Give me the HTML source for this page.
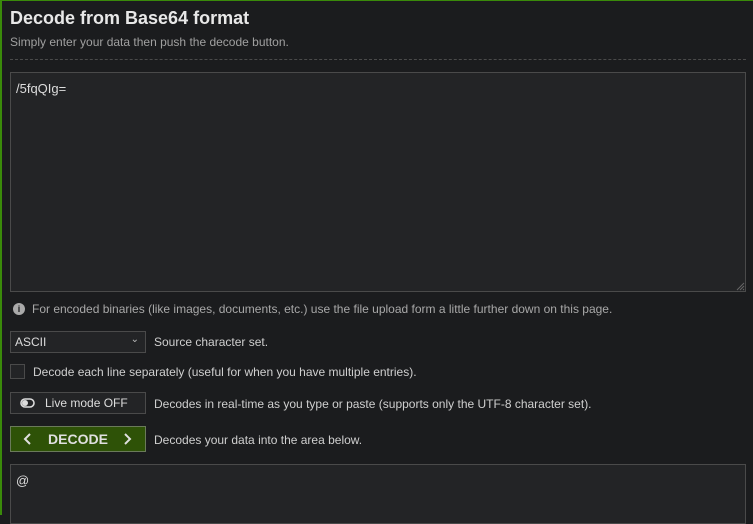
<!DOCTYPE html>
<html><head><style>
*{box-sizing:border-box;margin:0;padding:0}
body{width:753px;height:515px;overflow:hidden;background:#1b1c1e;font-family:"Liberation Sans",sans-serif;color:#d0d0d0;position:relative}
.a{position:absolute}
h1{position:absolute;left:10px;top:8px;font-size:18px;font-weight:bold;color:#e8e8e8}
.sub{left:10px;top:35px;font-size:12px;color:#a0a0a0}
.dash{left:10px;top:59px;width:736px;border-top:1px dashed #4a4a4a}
.ta{left:10px;width:736px;background:#232426;border:1px solid #4a4a4a;font-size:13px;color:#ddd;padding:8px 5px}
.lbl{font-size:12px;color:#cfcfcf}
.box{left:10px;width:136px;border:1px solid #4a4a4a;background:#232426;font-size:12px;color:#ddd}
</style></head><body>
<div class="a" style="left:0;top:0;width:753px;height:1px;background:#3a8a0a"></div>
<div class="a" style="left:0;top:0;width:2px;height:515px;background:#3a8a0a"></div>
<h1>Decode from Base64 format</h1>
<div class="a sub">Simply enter your data then push the decode button.</div>
<div class="a dash"></div>
<div class="a ta" style="top:72px;height:220px">/5fqQIg=</div>
<svg class="a" style="left:735px;top:281px" width="10" height="10"><path d="M9 2L2 9M9 5L5 9M9 8L8 9" stroke="#666" stroke-width="1"/></svg>
<div class="a" style="left:13px;top:303px;width:12px;height:12px;border-radius:50%;background:#aaa;color:#1b1c1e;font-size:9px;font-weight:bold;text-align:center;line-height:12px">i</div>
<div class="a lbl" style="left:32px;top:302px;color:#a8a8a8">For encoded binaries (like images, documents, etc.) use the file upload form a little further down on this page.</div>
<div class="a box" style="top:331px;height:22px;padding:3px 4px">ASCII<span style="position:absolute;right:6px;top:2px;font-size:10px;color:#bbb">&#8964;</span></div>
<div class="a lbl" style="left:154px;top:335px">Source character set.</div>
<div class="a" style="left:10px;top:364px;width:15px;height:15px;border:1px solid #4a4a4a;background:#232426"></div>
<div class="a lbl" style="left:33px;top:365px">Decode each line separately (useful for when you have multiple entries).</div>
<div class="a box" style="top:392px;height:22px;padding:3px 0 0 34px">Live mode OFF</div>
<svg class="a" style="left:20px;top:398px" width="16" height="10"><rect x="1" y="1" width="13" height="8" rx="4" fill="none" stroke="#ddd" stroke-width="1.6"/><circle cx="5" cy="5" r="3" fill="#ddd"/></svg>
<div class="a lbl" style="left:154px;top:397px">Decodes in real-time as you type or paste (supports only the UTF-8 character set).</div>
<div class="a" style="left:10px;top:426px;width:136px;height:26px;background:#2e5207;border:1px solid #6a7a5a;color:#e0e0e0;font-size:14px;font-weight:bold;text-align:center;line-height:24px">DECODE</div>
<svg class="a" style="left:23px;top:433px" width="10" height="12"><path d="M7 1L2 6L7 11" stroke="#e0e0e0" stroke-width="2" fill="none"/></svg>
<svg class="a" style="left:122px;top:433px" width="10" height="12"><path d="M3 1L8 6L3 11" stroke="#e0e0e0" stroke-width="2" fill="none"/></svg>
<div class="a lbl" style="left:154px;top:433px">Decodes your data into the area below.</div>
<div class="a ta" style="top:464px;height:60px">@</div>
</body></html>
